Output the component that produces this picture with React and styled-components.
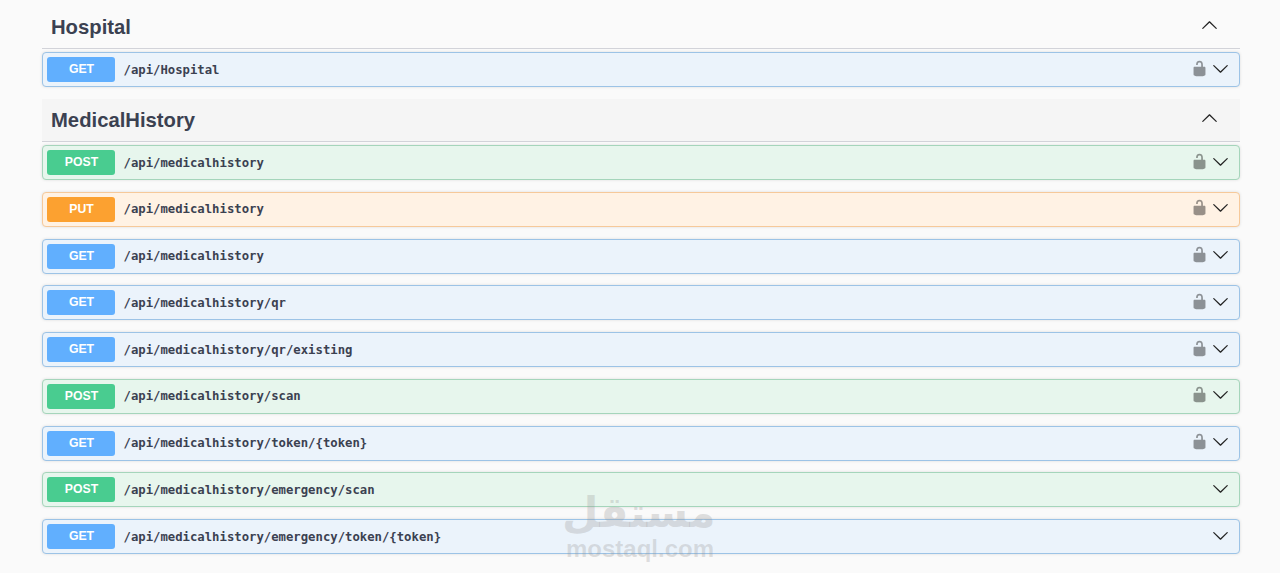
import React from 'react'
import styled, { createGlobalStyle } from 'styled-components';

const GlobalStyle = createGlobalStyle`
  html, body {
    margin: 0;
    padding: 0;
    background: #fafafa;
  }
  body {
    font-family: "Liberation Sans", Arial, sans-serif;
    overflow: hidden;
  }
`;

const colors = {
  GET: { bg: '#ebf3fb', main: '#61affe', line: '#9cc3e6' },
  POST: { bg: '#e7f6ed', main: '#49cc90', line: '#a5d5bb' },
  PUT: { bg: '#fff2e4', main: '#fca130', line: '#f6c99a' },
};

const sections = [
  {
    name: 'Hospital',
    ops: [{ method: 'GET', path: '/api/Hospital', locked: true }],
  },
  {
    name: 'MedicalHistory',
    shaded: true,
    ops: [
      { method: 'POST', path: '/api/medicalhistory', locked: true },
      { method: 'PUT', path: '/api/medicalhistory', locked: true },
      { method: 'GET', path: '/api/medicalhistory', locked: true },
      { method: 'GET', path: '/api/medicalhistory/qr', locked: true },
      { method: 'GET', path: '/api/medicalhistory/qr/existing', locked: true },
      { method: 'POST', path: '/api/medicalhistory/scan', locked: true },
      { method: 'GET', path: '/api/medicalhistory/token/{token}', locked: true },
      { method: 'POST', path: '/api/medicalhistory/emergency/scan' },
      { method: 'GET', path: '/api/medicalhistory/emergency/token/{token}' },
    ],
  },
];

function Chevron({ up }) {
  return (
    <ChevronIcon viewBox="0 0 20 20" $up={up}>
      <path d="M17.418 6.109c.272-.268.709-.268.979 0s.271.701 0 .969l-7.908 7.83c-.27.268-.707.268-.979 0l-7.908-7.83c-.27-.268-.27-.701 0-.969.271-.268.709-.268.979 0L10 13.25l7.418-7.141z" />
    </ChevronIcon>
  );
}

function Lock() {
  return (
    <LockIcon viewBox="0 0 20 20">
      <path d="M15.8 8H14V5.6C14 2.703 12.665 1 10 1 7.334 1 6 2.703 6 5.6V6h2v-.801C8 3.754 8.797 3 10 3c1.203 0 2 .754 2 2.199V8H4c-.553 0-1 .646-1 1.199V17c0 .549.428 1.139.951 1.307l1.197.387C5.672 18.861 6.55 19 7.1 19h5.8c.549 0 1.428-.139 1.951-.307l1.196-.387c.524-.167.953-.757.953-1.306V9.199C17 8.646 16.352 8 15.8 8z" />
    </LockIcon>
  );
}

export default function App() {
  return (
    <Page>
      <GlobalStyle />
      {sections.map((section) => (
        <Section key={section.name}>
          <TagHeader $shaded={section.shaded}>
            <TagName>{section.name}</TagName>
            <Chevron up />
          </TagHeader>
          {section.ops.map((op) => (
            <OpBlock key={op.method + op.path} $method={op.method}>
              <MethodBadge $method={op.method}>{op.method}</MethodBadge>
              <OpPath>{op.path}</OpPath>
              {op.locked && <Lock />}
              <Chevron />
            </OpBlock>
          ))}
        </Section>
      ))}
      <Watermark>
        <WatermarkArabic>مستقل</WatermarkArabic>
        <WatermarkLatin>mostaql.com</WatermarkLatin>
      </Watermark>
    </Page>
  )
}

const Page = styled.div`
  position: relative;
  box-sizing: border-box;
  width: 1280px;
  height: 573px;
  padding: 0 40px 0 42px;
  overflow: hidden;
`;

const Section = styled.section`
  margin-bottom: 12px;
`;

const TagHeader = styled.div`
  display: flex;
  align-items: center;
  justify-content: space-between;
  box-sizing: border-box;
  height: ${(p) => (p.$shaded ? '43px' : '49px')};
  padding: ${(p) => (p.$shaded ? '0 22px 0 9px' : '6px 22px 0 9px')};
  margin-bottom: 3px;
  background: ${(p) => (p.$shaded ? '#f5f5f5' : 'transparent')};
  border-bottom: 1px solid #d2d3d9;
`;

const TagName = styled.h3`
  margin: 0;
  font-size: 20.25px;
  font-weight: 700;
  color: #3b4151;
`;

const OpBlock = styled.div`
  display: flex;
  align-items: center;
  box-sizing: border-box;
  height: 35px;
  padding: 0 10px 0 4px;
  margin-bottom: 11.75px;
  border: 1px solid ${(p) => colors[p.$method].line};
  border-radius: 4px;
  background: ${(p) => colors[p.$method].bg};
  box-shadow: 0 0 3px rgba(0, 0, 0, 0.12);
  &:last-child {
    margin-bottom: 0;
  }
`;

const MethodBadge = styled.span`
  flex: none;
  box-sizing: border-box;
  width: 68px;
  height: 25px;
  padding-left: 1px;
  line-height: 25px;
  border-radius: 3px;
  background: ${(p) => colors[p.$method].main};
  color: #fff;
  font-size: 12.25px;
  font-weight: 700;
  text-align: center;
`;

const OpPath = styled.span`
  flex: 1;
  margin-left: 8.5px;
  font-family: "DejaVu Sans Mono", "Liberation Mono", monospace;
  font-size: 12.28px;
  font-weight: 600;
  color: #3b4151;
`;

const LockIcon = styled.svg`
  flex: none;
  width: 17px;
  height: 17px;
  margin: -3px 4px 0 0;
  fill: #000;
  opacity: 0.4;
`;

const ChevronIcon = styled.svg`
  flex: none;
  width: 17px;
  height: 17px;
  margin-top: -3px;
  fill: #222;
  transform: ${(p) => (p.$up ? 'rotate(180deg)' : 'none')};
`;

const Watermark = styled.div`
  position: absolute;
  left: 565px;
  top: 490px;
  width: 150px;
  text-align: center;
  color: rgba(150, 150, 150, 0.28);
  font-weight: 700;
  pointer-events: none;
`;

const WatermarkArabic = styled.div`
  margin-left: -3px;
  font-family: "DejaVu Sans", sans-serif;
  font-size: 42px;
  line-height: 46px;
`;

const WatermarkLatin = styled.div`
  font-size: 24px;
  line-height: 26px;
`;
